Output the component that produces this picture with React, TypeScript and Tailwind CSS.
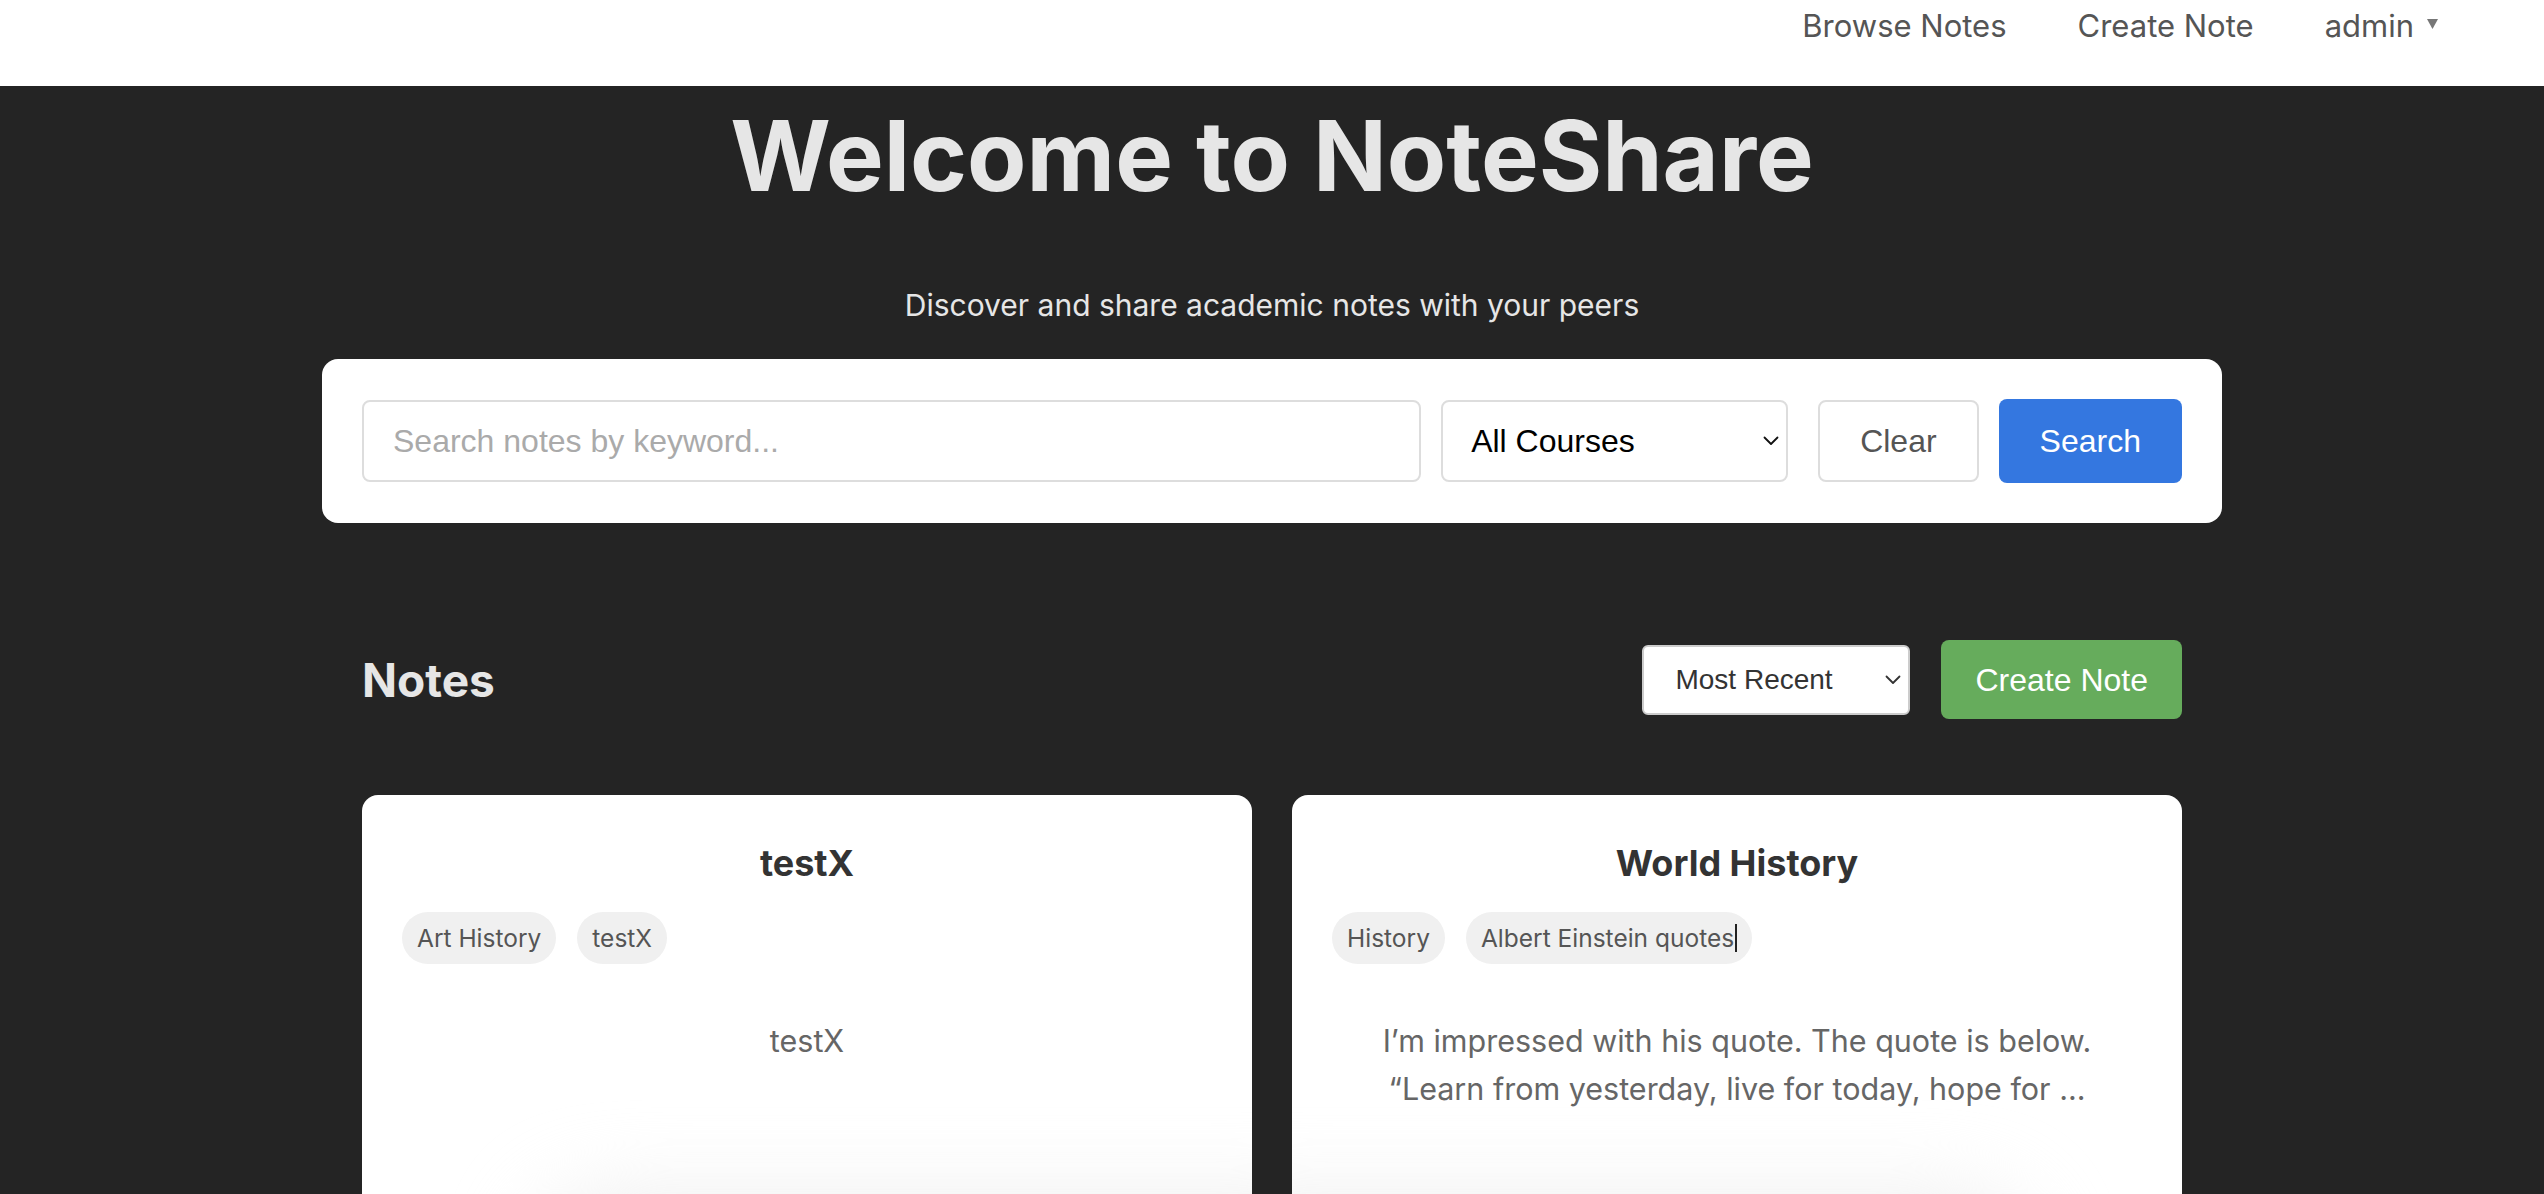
import React from 'react';

type Note = {
  title: string;
  tags: string[];
  lines: string[];
  caretAfterLastTag?: boolean;
  fadeSide: 'left' | 'right';
};

const notes: Note[] = [
  { title: 'testX', tags: ['Art History', 'testX'], lines: ['testX'], fadeSide: 'left' },
  {
    title: 'World History',
    tags: ['History', 'Albert Einstein quotes'],
    lines: [
      'I\u2019m impressed with his quote. The quote is below.',
      '\u201CLearn from yesterday, live for today, hope for ...',
    ],
    caretAfterLastTag: true,
    fadeSide: 'right',
  },
];

function Chevron({ color }: { color: string }) {
  return (
    <svg width="16" height="10" viewBox="0 0 16 10" fill="none" className="pointer-events-none absolute right-[9px] top-1/2 -translate-y-1/2">
      <path d="M1.5 1.5 L8 8 L14.5 1.5" stroke={color} strokeWidth="1.8" strokeLinecap="round" strokeLinejoin="round" />
    </svg>
  );
}

function NoteCard({ note }: { note: Note }) {
  return (
    <div className="relative h-[520px] overflow-hidden rounded-[16px] bg-white px-[40px] pt-[47px]">
      <h3 className="text-center text-[36px] font-bold leading-[43px] text-[#333]">{note.title}</h3>
      <div className="mt-[27px] flex gap-[21px]">
        {note.tags.map((tag, i) => (
          <span
            key={tag}
            className="flex h-[52px] items-center rounded-[26px] bg-[#f0f0f0] px-[15px] text-[24.5px] text-[#555]"
          >
            {tag}
            {note.caretAfterLastTag && i === note.tags.length - 1 && (
              <span className="ml-[1px] inline-block h-[28px] w-[2px] bg-[#222]" />
            )}
          </span>
        ))}
      </div>
      <p className="mt-[53px] text-center text-[30.5px] leading-[48px] text-[#666]">
        {note.lines.map((line, i) => (
          <React.Fragment key={i}>
            {i > 0 && <br />}
            {line}
          </React.Fragment>
        ))}
      </p>
      {/* soft grey fade at the bottom of the card */}
      <div
        className={
          note.fadeSide === 'left'
            ? 'pointer-events-none absolute left-[170px] right-[-120px] top-[400px] h-[220px] rounded-[80px] bg-[#efefef] blur-[40px]'
            : 'pointer-events-none absolute left-[-120px] right-[150px] top-[400px] h-[220px] rounded-[80px] bg-[#efefef] blur-[40px]'
        }
      />
    </div>
  );
}

export default function App() {
  return (
    <div className="h-[1194px] overflow-hidden bg-[#242424] font-['Inter',sans-serif]">
      <header className="flex h-[86px] items-start justify-end bg-white pr-[106px] pt-[8px]">
        <nav className="flex gap-[71px] text-[31px] leading-[36px] text-[#555]">
          <a href="#">Browse Notes</a>
          <a href="#">Create Note</a>
          <span className="flex items-center gap-[13px]">
            admin
            <svg width="11" height="11" viewBox="0 0 11 11" className="mt-[-6px]">
              <path d="M0 1 L11 1 L5.5 11 Z" fill="#777" />
            </svg>
          </span>
        </nav>
      </header>

      <main className="mx-auto w-[1900px]">
        <section className="pt-[12px] text-center">
          <h1 className="text-[97px] font-bold leading-[116px] text-[#e6e6e6]">Welcome to NoteShare</h1>
          <p className="mt-[73px] text-[30px] leading-[36px] text-[#e6e6e6]">
            Discover and share academic notes with your peers
          </p>
        </section>

        <div className="mt-[36px] flex items-center gap-[20px] rounded-[16px] bg-white p-[40px] font-['Liberation_Sans',Arial,sans-serif]">
          <input
            type="text"
            placeholder="Search notes by keyword..."
            className="h-[82px] min-w-0 flex-1 rounded-[8px] border-2 border-[#dddddd] px-[29px] text-[32px] text-[#333] outline-none placeholder:text-[#aaaaaa]"
          />
          <div className="relative mr-[10px] w-[347px]">
            <select className="h-[82px] w-full appearance-none rounded-[8px] border-2 border-[#dddddd] bg-white pl-[28px] text-[32px] text-black outline-none">
              <option>All Courses</option>
            </select>
            <Chevron color="#111" />
          </div>
          <button
            type="button"
            className="h-[82px] rounded-[8px] border-2 border-[#dddddd] bg-white px-[40px] text-[32px] text-[#555]"
          >
            Clear
          </button>
          <button type="button" className="h-[84px] rounded-[8px] bg-[#3477e0] px-[41px] text-[32px] text-white">
            Search
          </button>
        </div>

        <section className="px-[40px]">
          <div className="mt-[117px] flex items-center justify-between">
            <h2 className="text-[46px] font-bold leading-[54px] text-[#e6e6e6]">Notes</h2>
            <div className="flex items-center gap-[31px] font-['Liberation_Sans',Arial,sans-serif]">
              <div className="relative w-[268px]">
                <select className="h-[70px] w-full appearance-none rounded-[6px] border-2 border-[#cccccc] bg-white pl-[31px] text-[28px] text-[#333] outline-none">
                  <option>Most Recent</option>
                  <option>Oldest</option>
                </select>
                <Chevron color="#333" />
              </div>
              <button type="button" className="h-[79px] rounded-[8px] bg-[#66ac5c] px-[34px] text-[32px] text-white">
                Create Note
              </button>
            </div>
          </div>

          <div className="mt-[76px] grid grid-cols-2 gap-[40px]">
            {notes.map((note) => (
              <NoteCard key={note.title} note={note} />
            ))}
          </div>
        </section>
      </main>
    </div>
  );
}
